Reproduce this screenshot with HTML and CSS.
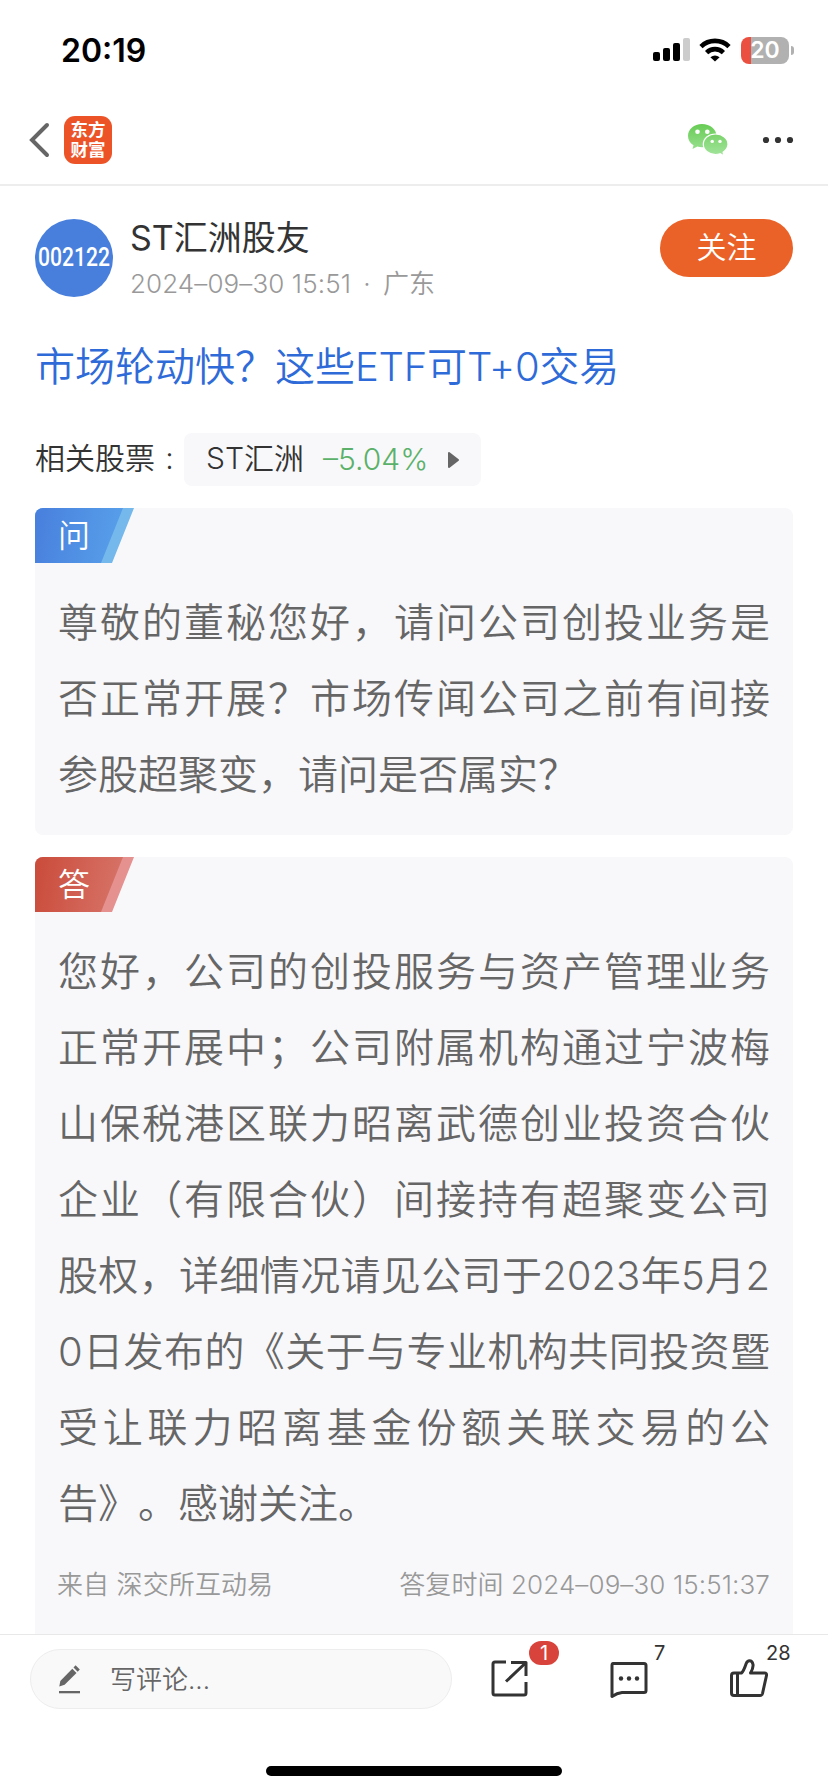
FILE: index.html
```
<!DOCTYPE html>
<html lang="zh-CN">
	<head>
		<meta charset="UTF-8">
		<title>ST汇洲股友</title>
		<link rel="stylesheet" href="styles.css">
	</head>
	<body>
		<div class="status">
			<span class="time">20:19</span>
			<svg class="signal" width="38" height="24" viewBox="0 0 38 24">
				<rect x="0" y="14" width="7" height="9" rx="2"/>
				<rect x="10" y="10" width="7" height="13" rx="2"/>
				<rect x="20" y="5" width="7" height="18" rx="2"/>
				<rect x="30" y="0" width="7" height="23" rx="2" fill="#ccc"/>
			</svg>
			<svg class="wifi" width="32" height="24" viewBox="0 0 32 24">
				<path d="M2 8.6a20 20 0 0 1 28 0M7.6 14.6a12 12 0 0 1 16.8 0" fill="none" stroke="#000" stroke-width="4.6"/>
				<path d="M16 23.6l-4.6-4.4q4.600-3.400 9.200 0z"/>
			</svg>
			<div class="battery"><span>20</span></div>
		</div>

		<div class="nav">
			<svg class="back" width="22" height="36" viewBox="0 0 22 36"><path d="M19 3L4 18l15 15" fill="none" stroke="#666" stroke-width="4" stroke-linecap="round"/></svg>
			<div class="logo">东方<br>财富</div>
			<svg class="wechat" width="42" height="34" viewBox="0 0 42 34">
				<defs>
					<linearGradient id="wx" x1="0" y1="0" x2="0" y2="34" gradientUnits="userSpaceOnUse">
						<stop offset="0" stop-color="#66cb52"/>
						<stop offset="1" stop-color="#a5e59f"/>
					</linearGradient>
				</defs>
				<path d="M15 1C7 1 1 6.300 1 13c0 4 2 7 5.500 9.300L5.500 26l4.800-2.400q2.300.7 4.700.7c8 0 14.500-5 14.500-11.500S23 1 15 1z" fill="url(#wx)"/>
				<path d="M28.500 11C21.500 11 16.300 15.600 16.300 21.300s5.200 10.200 12.200 10.200q2.300 0 4.600-.8l3.800 2-.8-3.500c3-2 4.900-4.700 4.900-7.900C41 15.600 35.500 11 28.500 11z" fill="url(#wx)" stroke="#fff" stroke-width="1.200"/>
				<g fill="#fff">
					<circle cx="10.500" cy="8.700" r="2.300"/><circle cx="20.300" cy="8.700" r="2.300"/>
					<circle cx="25.200" cy="18.400" r="1.700"/><circle cx="33" cy="18.400" r="1.700"/>
				</g>
			</svg>
			<svg class="more" width="32" height="8" viewBox="0 0 32 8" fill="#333"><circle cx="4" cy="4" r="3.100"/><circle cx="16" cy="4" r="3.100"/><circle cx="28" cy="4" r="3.100"/></svg>
		</div>

		<div class="main">
			<div class="author">
				<svg class="avatar" width="78" height="78" viewBox="0 0 78 78">
					<circle cx="39" cy="39" r="39" fill="#487fdd"/>
					<text x="3" y="47" textLength="72" lengthAdjust="spacingAndGlyphs">002122</text>
				</svg>
				<div class="info">
					<div class="name">ST汇洲股友</div>
					<div class="date"><span>2024–09–30 15:51</span><i>·</i>广东</div>
				</div>
				<div class="follow">关注</div>
			</div>

			<div class="title">市场轮动快？这些<span>ETF</span>可<span>T+0</span>交易</div>

			<div class="stock">
				<span class="label">相关股票</span><span class="colon">:</span>
				<div class="chip">
					<span>ST汇洲</span>
					<span class="down">–5.04%</span>
					<svg width="11" height="16" viewBox="0 0 11 16"><path d="M1 1l9 7-9 7z" fill="#666" stroke="#666" stroke-width="2" stroke-linejoin="round"/></svg>
				</div>
			</div>

			<div class="card">
				<div class="tag ask"><span>问</span></div>
				<p>尊敬的董秘您好，请问公司创投业务是否正常开展？市场传闻公司之前有间接参股超聚变，请问是否属实？</p>
			</div>

			<div class="card answer">
				<div class="tag reply"><span>答</span></div>
				<p>您好，公司的创投服务与资产管理业务正常开展中；公司附属机构通过宁波梅山保税港区联力昭离武德创业投资合伙企业（有限合伙）间接持有超聚变公司股权，详细情况请见公司于2023年5月20日发布的《关于与专业机构共同投资暨受让联力昭离基金份额关联交易的公告》。感谢关注。</p>
				<div class="source">
					<span>来自 深交所互动易</span>
					<span>答复时间 2024–09–30 15:51:37</span>
				</div>
			</div>
		</div>

		<div class="footer">
			<div class="bar">
				<div class="comment">
					<svg width="22" height="30" viewBox="0 0 22 30" fill="#666">
						<path d="M0.300 22.500l1-5.500L13.300 4.800l4.200 4.200L5.600 20.800z"/>
						<path d="M14.500 3.500L16.600 1.300l4.200 4.200-2.100 2.200z"/>
						<rect x="0" y="27" width="21" height="2.300"/>
					</svg>
					<span>写评论...</span>
				</div>
				<div class="item share">
					<svg width="38" height="40" viewBox="0 0 38 40">
						<path d="M16 3H5Q3 3 3 5v29q0 2 2 2h29q2 0 2-2V23M21 3.500h15V17M35 4.500L16 22.500"/>
					</svg>
					<b class="badge">1</b>
				</div>
				<div class="item talk">
					<svg width="40" height="40" viewBox="0 0 40 40">
						<path d="M4 4.500h31q2 0 2 2v25q0 2-2 2H13Q8 34 3 37.500V6.500Q3 4.500 4 4.500z"/>
						<g class="dots"><circle cx="12" cy="19.500" r="2.200"/><circle cx="20" cy="19.500" r="2.200"/><circle cx="28" cy="19.500" r="2.200"/></g>
					</svg>
					<b>7</b>
				</div>
				<div class="item like">
					<svg width="40" height="40" viewBox="0 0 40 40">
						<path d="M8.500 14H5q-2.500 0-2.500 2.500V34q0 2.500 2.500 2.500h26q2 0 2.500-2l4-18q.5-2.500-2-2.500H21.500Q24.500 9 24 5.500 23.300 1.800 20.500 1.800q-2.200 0-3.300 2.700Q14.500 12.500 12.500 14H8.500V36.500"/>
					</svg>
					<b>28</b>
				</div>
			</div>
			<div class="home"></div>
		</div>
	</body>
</html>
```

FILE: styles.css
```
*{
	box-sizing: border-box;
}
body{
	margin: 0;
	width: 828px;
	height: 1792px;
	overflow: hidden;
	display: flex;
	flex-direction: column;
	background: #fff;
	color: #333;
	font-family: Inter,"Noto Sans CJK SC",sans-serif;
	font-weight: 350;
	text-spacing-trim: space-all;
}
svg{
	display: block;
	flex: none;
}

/*状态栏*/
.status{
	height: 96px;
	padding: 4px 34px 0 61px;
	display: flex;
	align-items: center;
	color: #000;
}
.time{
	font-size: 32px;
	font-weight: 600;
	margin-right: auto;
}
.signal{
	margin-right: 8px;
}
.wifi{
	margin-right: 10px;
}
.battery{
	position: relative;
	width: 48px;
	height: 27px;
	margin-right: 5px;
	border-radius: 8px;
	background: linear-gradient(90deg,#eb4f3f 10px,#b1b1b1 10px);
	color: #fff;
	font-size: 23px;
	font-weight: 600;
	line-height: 27px;
	text-align: center;
}
.battery:after{
	content: "";
	position: absolute;
	left: 50px;
	top: 9px;
	width: 3px;
	height: 9px;
	border-radius: 0 4px 4px 0;
	background: #b1b1b1;
}

/*导航*/
.nav{
	height: 90px;
	padding: 0 34px 0 28px;
	display: flex;
	align-items: center;
	border-bottom: 2px solid #ededed;
}
.logo{
	width: 48px;
	height: 48px;
	margin-left: 14px;
	margin-right: auto;
	padding-top: 4px;
	border-radius: 11px;
	background: #ec5428;
	color: #fff;
	font-size: 17.5px;
	font-weight: 700;
	line-height: 20px;
	text-align: center;
}
.wechat{
	margin-right: 33px;
}

/*正文*/
.main{
	flex: 1;
	min-height: 0;
	overflow: hidden;
	padding: 33px 35px 0;
}
.author{
	display: flex;
	height: 78px;
}
.avatar{
	overflow: visible;
}
.avatar text{
	fill: #fff;
	font-family: Roboto,sans-serif;
	font-size: 26px;
	font-weight: 500;
}
.info{
	margin-left: 17px;
}
.name{
	height: 41px;
	line-height: 37px;
	font-size: 34px;
	font-weight: 400;
}
.date{
	line-height: 47px;
	font-size: 26px;
	color: #999;
	white-space: nowrap;
}
.date span{
	letter-spacing: 0.1px;
}
.date i{
	display: inline-block;
	width: 32px;
	font-style: normal;
	text-align: center;
}
.follow{
	width: 133px;
	height: 58px;
	margin-left: auto;
	border-radius: 29px;
	background: #eb6229;
	color: #fff;
	font-size: 30px;
	line-height: 57px;
	text-align: center;
}
.title{
	margin-top: 40px;
	height: 60px;
	line-height: 60px;
	font-size: 40px;
	color: #2f6bd8;
}
.title span{
	letter-spacing: -0.3px;
}
.stock{
	display: flex;
	align-items: center;
	height: 53px;
	margin-top: 36px;
	font-size: 30px;
	line-height: 50px;
}
.stock span{
	height: 53px;
}
.colon{
	width: 29px;
	text-align: center;
}
.chip{
	display: flex;
	align-items: center;
	width: 297px;
	height: 53px;
	padding: 0 22px;
	border-radius: 8px;
	background: #f8f8fb;
}
.chip svg{
	margin-left: auto;
}
.chip .down{
	margin-left: 19px;
	color: #5bb169;
	line-height: 52px;
}
.card{
	margin-top: 22px;
	padding-bottom: 22px;
	border-radius: 8px;
	background: #f8f8fb;
	overflow: hidden;
}
.answer{
	height: 900px;
}
.tag{
	width: 99px;
	height: 55px;
	clip-path: polygon(0 0,100% 0,77px 100%,0 100%);
}
.tag span{
	display: block;
	height: 55px;
	padding-left: 23px;
	clip-path: polygon(0 0,88px 0,66px 100%,0 100%);
	color: #fff;
	font-size: 32px;
	line-height: 55px;
}
.ask{
	background: #75b8ec;
}
.ask span{
	background: linear-gradient(100deg,#487fdd,#5aa5ec);
}
.reply{
	background: #e49190;
}
.reply span{
	background: linear-gradient(100deg,#ca4b3a,#d97a70);
}
.card p{
	margin: 22px 23px 0;
	color: #666;
	font-size: 40px;
	line-height: 76px;
	text-align: justify;
	word-break: break-all;
}
.source{
	display: flex;
	justify-content: space-between;
	margin: 23px 23px 0 22px;
	line-height: 40px;
	font-size: 26px;
	letter-spacing: 0.1px;
	color: #999;
}

/*底部*/
.footer{
	height: 158px;
	border-top: 1px solid #e8e8e8;
	background: #fff;
}
.bar{
	display: flex;
	height: 131px;
	padding: 14px 0 0 30px;
}
.comment{
	display: flex;
	align-items: center;
	width: 422px;
	height: 60px;
	padding-left: 28px;
	border: 1px solid #ededed;
	border-radius: 30px;
	background: #f9f9f9;
	color: #666;
	font-size: 26px;
}
.comment span{
	margin-left: 29px;
	padding-bottom: 4px;
}
.item{
	position: relative;
	height: 40px;
	margin-top: 10px;
}
.item path{
	fill: none;
	stroke: #333;
	stroke-width: 3;
	stroke-linejoin: round;
}
.dots{
	fill: #333;
}
.item b{
	position: absolute;
	left: 45px;
	top: -18px;
	font-size: 20px;
	font-weight: 400;
	line-height: 24px;
}
.share{
	margin-left: 38px;
}
.talk{
	margin-left: 81px;
}
.like{
	margin-left: 80px;
}
.item .badge{
	left: 39px;
	width: 30px;
	border-radius: 12px;
	background: #d8433b;
	color: #fff;
	text-align: center;
}
.like b{
	left: 37px;
}
.home{
	width: 296px;
	height: 10px;
	margin: 0 auto;
	border-radius: 5px;
	background: #000;
}
```
